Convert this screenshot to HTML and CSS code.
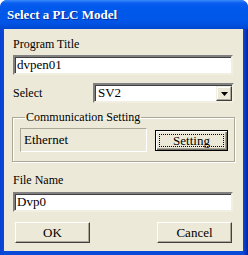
FILE: index.html
```html
<!DOCTYPE html>
<html>
<head>
<meta charset="utf-8">
<link rel="stylesheet" href="styles.css">
</head>
<body>
<div class="window">
  <div class="titlebar">Select a PLC Model</div>
  <div class="client">
    <div class="label">Program Title</div>
    <div class="field">dvpen01</div>
    <div class="select-row">
      <div class="label">Select</div>
      <div class="combo">
        <span class="combo-text">SV2</span>
        <span class="combo-btn"><svg width="7" height="4" viewBox="0 0 7 4"><path d="M0 0H7L3.5 4Z" fill="#000"/></svg></span>
      </div>
    </div>
    <fieldset class="group">
      <legend>Communication Setting</legend>
      <div class="group-row">
        <div class="static">Ethernet</div>
        <div class="btn default"><span class="focus">Setting</span></div>
      </div>
    </fieldset>
    <div class="label fname">File Name</div>
    <div class="field fname-field">Dvp0</div>
    <div class="buttons">
      <div class="btn push">OK</div>
      <div class="btn push">Cancel</div>
    </div>
  </div>
</div>
</body>
</html>
```
FILE: styles.css
```css
html, body {
  margin: 0;
  padding: 0;
  background: #ffffff;
}
.window {
  width: 248px;
  height: 255px;
  box-sizing: border-box;
  display: flex;
  flex-direction: column;
  border-radius: 7px 7px 0 0;
  background: linear-gradient(to right, #0842d6 0, #0a4ad8 4px, #0a4ad8 243px, #0a3bc8 245px, #05249a 248px);
  overflow: hidden;
  font-family: "Liberation Serif", "Times New Roman", serif;
  font-size: 12px;
  color: #000;
}
.titlebar {
  height: 29px;
  flex: none;
  box-sizing: border-box;
  padding: 6px 0 0 7px;
  font-weight: bold;
  font-size: 13px;
  line-height: 17px;
  color: #fff;
  text-shadow: 1px 1px 0 #0a2a9a;
  background: linear-gradient(to bottom, #3a8cf8 0, #0a5ef0 3px, #0058ec 8px, #0058ea 18px, #0152e2 24px, #0046ce 29px);
  border-radius: 7px 7px 0 0;
}
.client {
  flex: 1;
  margin: 0 5px 4px 4px;
  background: #ece9d8;
  padding: 8px 10px 0 9px;
  display: flex;
  flex-direction: column;
}
.label {
  height: 14px;
  line-height: 14px;
  white-space: nowrap;
}
.field {
  margin-top: 4px;
  height: 20px;
  box-sizing: border-box;
  background: #fff;
  border-style: solid;
  border-width: 2px;
  border-color: #808080 #f1efe2 #f1efe2 #808080;
  box-shadow: inset 1px 1px 0 #404040;
  padding: 0 0 0 2px;
  line-height: 16px;
  font-size: 13px;
}
.select-row {
  margin-top: 8px;
  display: flex;
  align-items: flex-start;
  height: 20px;
}
.select-row .label {
  width: 80px;
  margin-top: 3px;
}
.combo {
  flex: 1;
  margin-right: -1px;
  height: 20px;
  box-sizing: border-box;
  background: #fff;
  border-style: solid;
  border-width: 2px;
  border-color: #808080 #f1efe2 #f1efe2 #808080;
  box-shadow: inset 1px 1px 0 #404040;
  display: flex;
  align-items: stretch;
}
.combo-text {
  flex: 1;
  padding-left: 3px;
  line-height: 16px;
  font-size: 13px;
}
.combo-btn {
  width: 16px;
  box-sizing: border-box;
  background: #ece9d8;
  border-style: solid;
  border-width: 1px;
  border-color: #f1efe2 #404040 #404040 #f1efe2;
  box-shadow: inset -1px -1px 0 #aca899, inset 1px 1px 0 #fff;
  display: flex;
  align-items: center;
  justify-content: center;
  margin: 1px 0 0 0;
}
.group {
  margin: 7px -2px 0 -1px;
  padding: 4px 6px 0 7px;
  border: 1px solid #aca899;
  box-shadow: 1px 1px 0 #fff, inset 1px 1px 0 #fff;
  min-width: 0;
  height: 52px;
  box-sizing: border-box;
}
.group legend {
  padding: 0 1px;
  margin-left: 5px;
  line-height: 14px;
  white-space: nowrap;
}
.group-row {
  display: flex;
  align-items: flex-start;
  justify-content: space-between;
}
.static {
  width: 127px;
  height: 24px;
  box-sizing: border-box;
  border: 1px solid;
  border-color: #aca899 #fff #fff #aca899;
  padding-left: 3px;
  line-height: 21px;
  font-size: 13px;
}
.btn {
  box-sizing: border-box;
  background: #ece9d8;
  text-align: center;
  font-size: 13px;
}
.btn.default {
  width: 73px;
  height: 21px;
  margin-top: 2px;
  border: 1px solid #000;
  box-shadow: inset 1px 1px 0 #fff, inset -1px -1px 0 #716f64, inset -2px -2px 0 #aca899;
  padding: 3px;
  display: flex;
}
.focus {
  flex: 1;
  border: 1px dotted #000;
  line-height: 12px;
}
.fname {
  margin-top: 11px;
}
.fname-field {
  margin-top: 5px;
}
.buttons {
  margin-top: 10px;
  display: flex;
  justify-content: space-between;
  padding: 0 1px 0 2px;
}
.btn.push {
  width: 75px;
  height: 21px;
  line-height: 19px;
  border: 1px solid;
  border-color: #fff #404040 #404040 #fff;
  box-shadow: inset -1px -1px 0 #aca899;
}
```
